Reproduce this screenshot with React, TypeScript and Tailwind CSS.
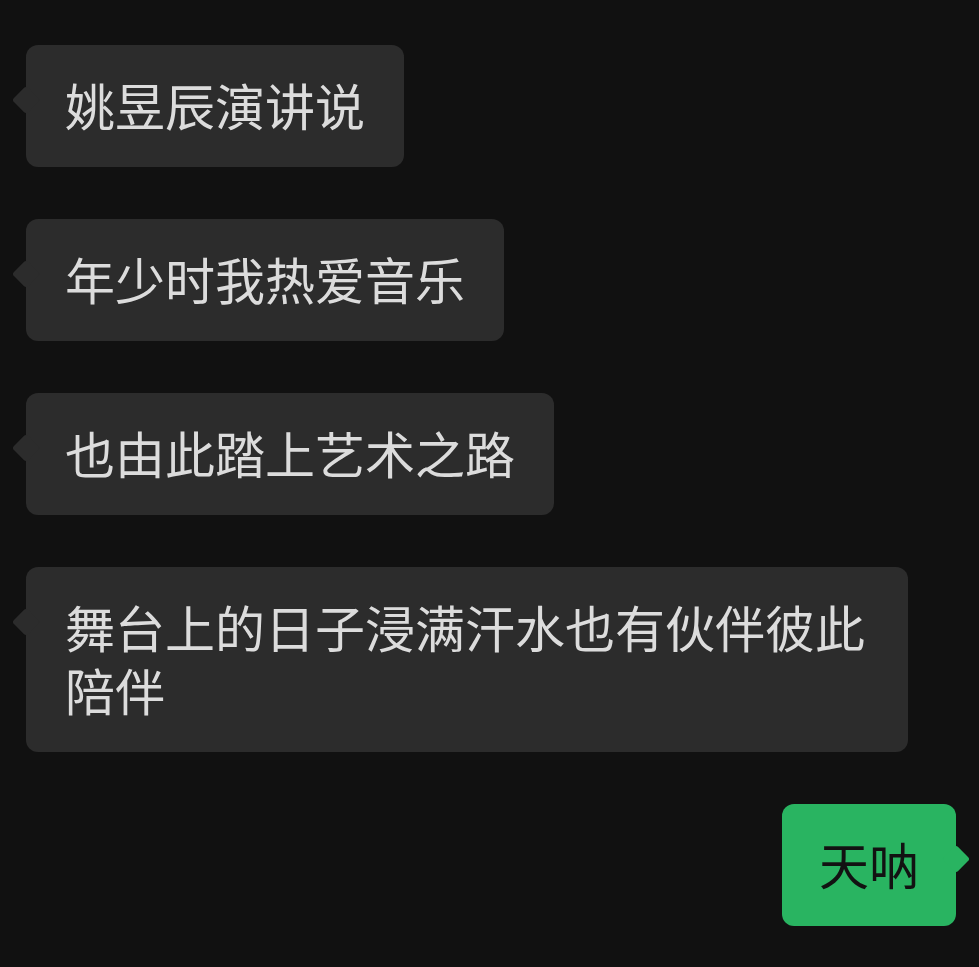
const font = { fontFamily: '"Noto Sans CJK SC", "Noto Sans", sans-serif' }

type Msg = { text: string; mine?: boolean }

const messages: Msg[] = [
  { text: "姚昱辰演讲说" },
  { text: "年少时我热爱音乐" },
  { text: "也由此踏上艺术之路" },
  { text: "舞台上的日子浸满汗水也有伙伴彼此陪伴" },
  { text: "天呐", mine: true },
]

function Bubble({ text, mine }: Msg) {
  return (
    <div
      className={
        mine
          ? "relative self-end rounded-[12px] bg-[#29b461] px-[37px] py-[29.5px] text-[#121212]"
          : "relative self-start max-w-[882px] rounded-[12px] bg-[#2c2c2c] px-[39px] py-[29.5px] text-[#dcdcdc]"
      }
    >
      <span
        className={
          mine
            ? "absolute right-[-10px] top-[45px] h-[20px] w-[20px] rotate-45 rounded-[3px] bg-[#29b461]"
            : "absolute left-[-10px] top-[45px] h-[20px] w-[20px] rotate-45 rounded-[3px] bg-[#2c2c2c]"
        }
      />
      <p className="relative -translate-y-[2px] text-[50px] leading-[63px]" style={font}>
        {text}
      </p>
    </div>
  )
}

export default function App() {
  return (
    <div className="flex min-h-[967px] w-full flex-col gap-[52px] bg-[#111111] pl-[26px] pr-[23px] pt-[45px]">
      {messages.map((m, i) => (
        <Bubble key={i} {...m} />
      ))}
    </div>
  )
}
